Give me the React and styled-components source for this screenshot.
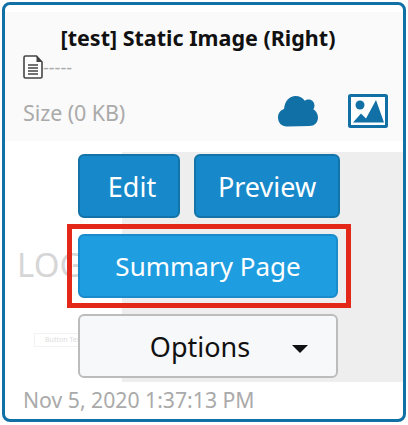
import React from 'react';
import styled, { createGlobalStyle } from 'styled-components';

const Global = createGlobalStyle`
    html, body {
        margin: 0;
        padding: 0;
        background: #fff;
    }
    body {
        font-family: "Noto Sans", "Open Sans", sans-serif;
    }
`;

const Page = styled.div`
    width: 408px;
    height: 425px;
    padding: 2px 2px 3px 2px;
    box-sizing: border-box;
`;

const Card = styled.div`
    height: 420px;
    box-sizing: border-box;
    border: 3px solid #1170a5;
    border-radius: 8px;
    padding-top: 7px;
    display: flex;
    flex-direction: column;
    overflow: hidden;
`;

const Header = styled.div`
    height: 129px;
    background: #fafafa;
    padding: 0 18px;
    box-sizing: border-box;
    flex: none;
`;

const Title = styled.div`
    font-size: 21.5px;
    font-weight: 700;
    line-height: 28px;
    padding-top: 12px;
    text-align: center;
    color: #111;
    width: 350px;
`;

const Meta = styled.div`
    display: flex;
    align-items: center;
    height: 24px;
    margin-top: 3px;
    font-size: 18px;
    color: #aaa;
`;

const SizeRow = styled.div`
    display: flex;
    align-items: center;
    justify-content: space-between;
    margin-top: 14px;
    height: 36px;
`;

const SizeText = styled.span`
    font-size: 21.5px;
    color: #aaa;
    letter-spacing: -0.1px;
    position: relative;
    top: 1px;
`;

const Icons = styled.div`
    display: flex;
    align-items: center;
    gap: 30px;
    margin-right: -3px;
`;

const Preview = styled.div`
    position: relative;
    margin-top: 11px;
    height: 230px;
    flex: none;
    display: flex;
    flex-direction: column;
    align-items: flex-start;
    padding: 2px 0 0 73px;
    box-sizing: border-box;
`;

const Shade = styled.div`
    position: absolute;
    top: 0;
    right: 0;
    bottom: 0;
    left: 117px;
    background: #eee;
`;

const LogoText = styled.div`
    position: absolute;
    left: 12px;
    top: 93px;
    font-size: 33px;
    line-height: 40px;
    color: #d6d6d6;
`;

const GhostButton = styled.div`
    position: absolute;
    left: 29px;
    top: 181px;
    width: 100px;
    height: 14px;
    border: 1px solid #f2f2f2;
    font-size: 7px;
    line-height: 12px;
    color: #ddd;
    padding-left: 10px;
    box-sizing: border-box;
`;

const Row = styled.div`
    position: relative;
    display: flex;
    gap: 14px;
`;

const Button = styled.div`
    position: relative;
    height: 64px;
    width: ${({ $w }) => $w}px;
    box-sizing: border-box;
    border-radius: 6px;
    display: flex;
    align-items: center;
    justify-content: center;
    padding-left: ${({ $shift }) => $shift || 0}px;
    font-size: ${({ $kind }) => ($kind === 'summary' ? 26 : 27)}px;
    color: ${({ $kind }) => ($kind === 'options' ? '#111' : '#fff')};
    background: ${({ $kind }) =>
        $kind === 'options' ? '#f7f8fa' : $kind === 'summary' ? '#1e9de1' : '#1789ca'};
    border: 2px solid ${({ $kind }) =>
        $kind === 'options' ? '#bcbcbc' : $kind === 'summary' ? '#1a8ccb' : '#1474a8'};
    margin-top: ${({ $top }) => $top || 0}px;
`;

const Highlight = styled.div`
    position: absolute;
    left: -13px;
    right: -15px;
    top: -12px;
    bottom: -12px;
    border: 5px solid #e32718;
    pointer-events: none;
`;

const Caret = styled.span`
    width: 0;
    height: 0;
    border-left: 8px solid transparent;
    border-right: 8px solid transparent;
    border-top: 8px solid #111;
    margin-left: 41.5px;
    margin-top: 5px;
`;

const OptionsLabel = styled.span`
    margin-left: 41.5px;
`;

const Footer = styled.div`
    font-size: 21.2px;
    line-height: 30px;
    color: #aaa;
    padding-left: 18px;
    padding-top: 3px;
`;

const DocIcon = () => (
    <svg width="20" height="24" viewBox="0 0 20 24" style={{ flex: 'none' }}>
        <path d="M2.500 1h11l5.500 6v14.500a1.500 1.500 0 0 1-1.500 1.500h-15A1.500 1.500 0 0 1 1 21.500v-19A1.500 1.500 0 0 1 2.500 1z" fill="#fff" stroke="#444" strokeWidth="1.6" />
        <path d="M13.500 1v6H19z" fill="#444" />
        <path d="M5 10h10M5 13h10M5 16h10M5 19h10" stroke="#444" strokeWidth="1.4" />
    </svg>
);

const CloudIcon = () => (
    <svg width="40" height="32" viewBox="0 0 40 32">
        <path d="M9 31.500C3.500 31.500 0 27.500 0 22.500c0-4.200 2.600-7.500 6-8.500C6.800 6 11.500 1 17.500 1c4 0 7.300 1.800 9.300 4.800 1-.9 2.300-1.400 3.700-1.400 3.500 0 6 2.700 6 6.200 0 1.500-.4 2.700-1.100 3.700 2.700 1.700 4.600 4.700 4.600 8.200 0 5-3.800 8.500-8.500 8.500z" fill="#1170a5" />
    </svg>
);

const ImageIcon = () => (
    <svg width="40" height="34" viewBox="0 0 40 34">
        <rect x="1.500" y="1.500" width="37" height="31" rx="1" fill="#fff" stroke="#1170a5" strokeWidth="3" />
        <circle cx="12" cy="11" r="4.500" fill="#1170a5" />
        <path d="M5 28.500l8-9 5 5L28 6l8 22.500z" fill="#1170a5" />
    </svg>
);

const App = () => (
    <Page>
        <Global />
        <Card>
            <Header>
                <Title>[test] Static Image (Right)</Title>
                <Meta>
                    <DocIcon />
                    -----
                </Meta>
                <SizeRow>
                    <SizeText>Size (0 KB)</SizeText>
                    <Icons>
                        <CloudIcon />
                        <ImageIcon />
                    </Icons>
                </SizeRow>
            </Header>
            <Preview>
                <Shade />
                <LogoText>LOGO</LogoText>
                <GhostButton>Button Text</GhostButton>
                <Row>
                    <Button $w={102} $shift={6}>Edit</Button>
                    <Button $w={146}>Preview</Button>
                </Row>
                <Button $kind="summary" $w={260} $top={16}>
                    Summary Page
                    <Highlight />
                </Button>
                <Button $kind="options" $w={260} $top={16}>
                    <OptionsLabel>Options</OptionsLabel>
                    <Caret />
                </Button>
            </Preview>
            <Footer>Nov 5, 2020 1:37:13 PM</Footer>
        </Card>
    </Page>
);

export default App;
